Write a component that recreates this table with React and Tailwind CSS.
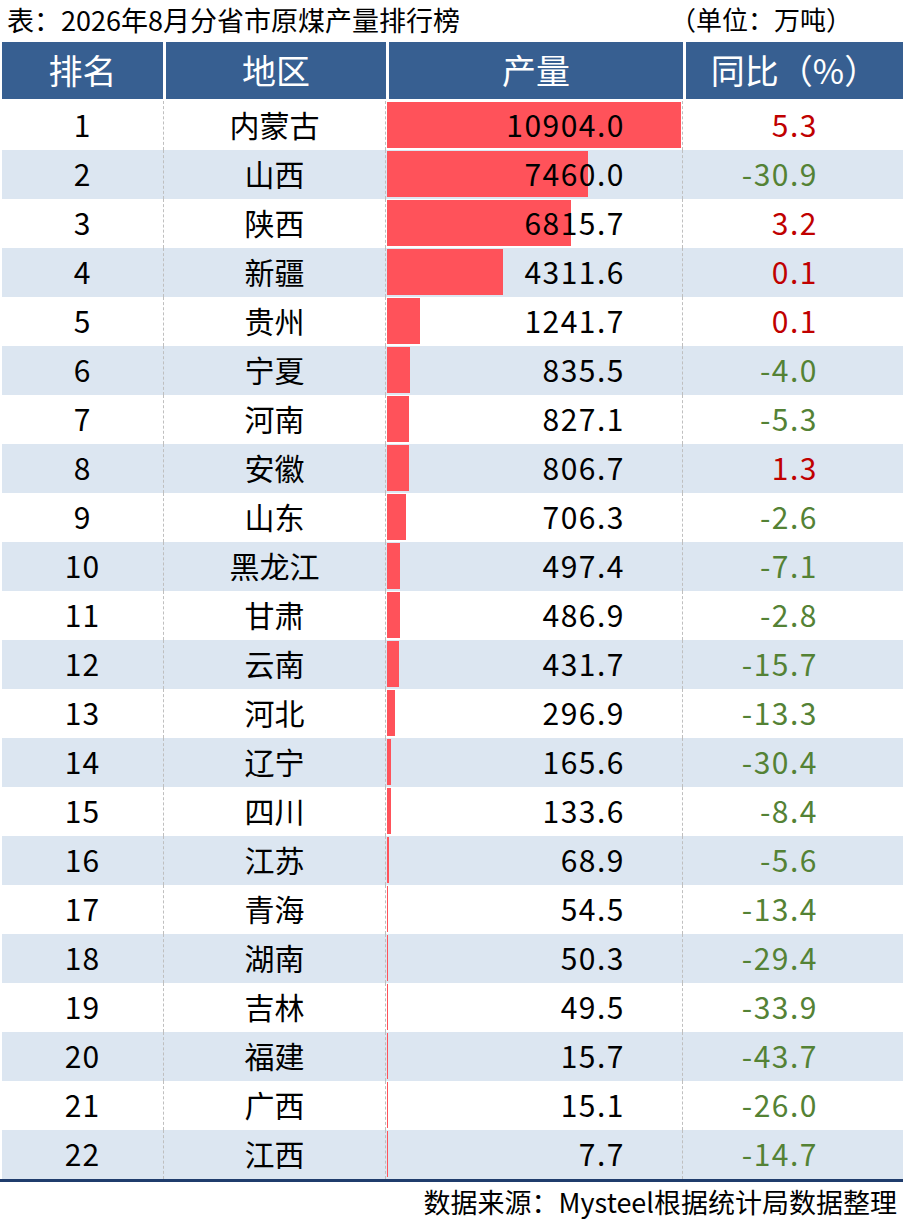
import React from 'react';

const rows = [
  [1, '内蒙古', 10904.0, 5.3],
  [2, '山西', 7460.0, -30.9],
  [3, '陕西', 6815.7, 3.2],
  [4, '新疆', 4311.6, 0.1],
  [5, '贵州', 1241.7, 0.1],
  [6, '宁夏', 835.5, -4.0],
  [7, '河南', 827.1, -5.3],
  [8, '安徽', 806.7, 1.3],
  [9, '山东', 706.3, -2.6],
  [10, '黑龙江', 497.4, -7.1],
  [11, '甘肃', 486.9, -2.8],
  [12, '云南', 431.7, -15.7],
  [13, '河北', 296.9, -13.3],
  [14, '辽宁', 165.6, -30.4],
  [15, '四川', 133.6, -8.4],
  [16, '江苏', 68.9, -5.6],
  [17, '青海', 54.5, -13.4],
  [18, '湖南', 50.3, -29.4],
  [19, '吉林', 49.5, -33.9],
  [20, '福建', 15.7, -43.7],
  [21, '广西', 15.1, -26.0],
  [22, '江西', 7.7, -14.7],
];

const MAX = 10904.0;
const BAR_W = 294;

const App = () => {
  return (
    <div
      className="w-[903px] h-[1225px] bg-white text-black overflow-hidden"
      style={{ fontFamily: '"Noto Sans CJK SC", "Noto Sans", sans-serif' }}
    >
      {/* Title */}
      <div className="h-[42px] flex items-center justify-between pl-[7px] pr-[51px] pb-[4px] leading-none">
        <span className="text-[27px]">表：2026年8月分省市原煤产量排行榜</span>
        <span className="text-[26px]">（单位：万吨）</span>
      </div>

      {/* Header */}
      <div className="flex pl-[2px] gap-[3px] h-[57px] text-white text-[34px] leading-none">
        <div className="w-[161px] bg-[#375f91] flex items-center justify-center pb-[2px]">排名</div>
        <div className="w-[220px] bg-[#375f91] flex items-center justify-center pb-[2px]">地区</div>
        <div className="w-[294px] bg-[#375f91] flex items-center justify-center pb-[2px]">产量</div>
        <div className="flex-1 bg-[#375f91] flex items-center justify-center pb-[2px]">同比（%）</div>
      </div>

      {/* Body */}
      <div className="mt-[2px] border-b-[3px] border-[#1f3c6c]">
        {rows.map(([rank, region, output, yoy], i) => (
          <div
            key={rank}
            className={`flex h-[49px] ml-[2px] text-[30px] leading-none ${i % 2 === 1 ? 'bg-[#dce6f1]' : 'bg-white'}`}
          >
            <div className="w-[162px] flex items-center justify-center pb-[3px] tracking-[1px] border-r border-dashed border-[#bfbfbf]">
              {rank}
            </div>
            <div className="w-[222px] flex items-center justify-center pb-[3px] border-r border-dashed border-[#bfbfbf]">
              {region}
            </div>
            <div className="w-[297px] relative flex items-center justify-end pr-[57px] pb-[3px] border-r border-dashed border-[#bfbfbf]">
              <div
                className="absolute left-[1px] top-[1px] h-[46px] bg-[#ff525a]"
                style={{ width: `${(output / MAX) * BAR_W}px` }}
              />
              <span className="relative tracking-[1.5px]">{output.toFixed(1)}</span>
            </div>
            <div
              className={`flex-1 flex items-center justify-end pr-[85px] pb-[3px] tracking-[1.5px] ${yoy > 0 ? 'text-[#c00000]' : 'text-[#548235]'}`}
            >
              {yoy.toFixed(1)}
            </div>
          </div>
        ))}
      </div>

      {/* Footer */}
      <div className="h-[40px] flex items-center justify-end pr-[6px] pb-[2px] text-[27px] leading-none">
        数据来源：Mysteel根据统计局数据整理
      </div>
    </div>
  );
};

export default App;
